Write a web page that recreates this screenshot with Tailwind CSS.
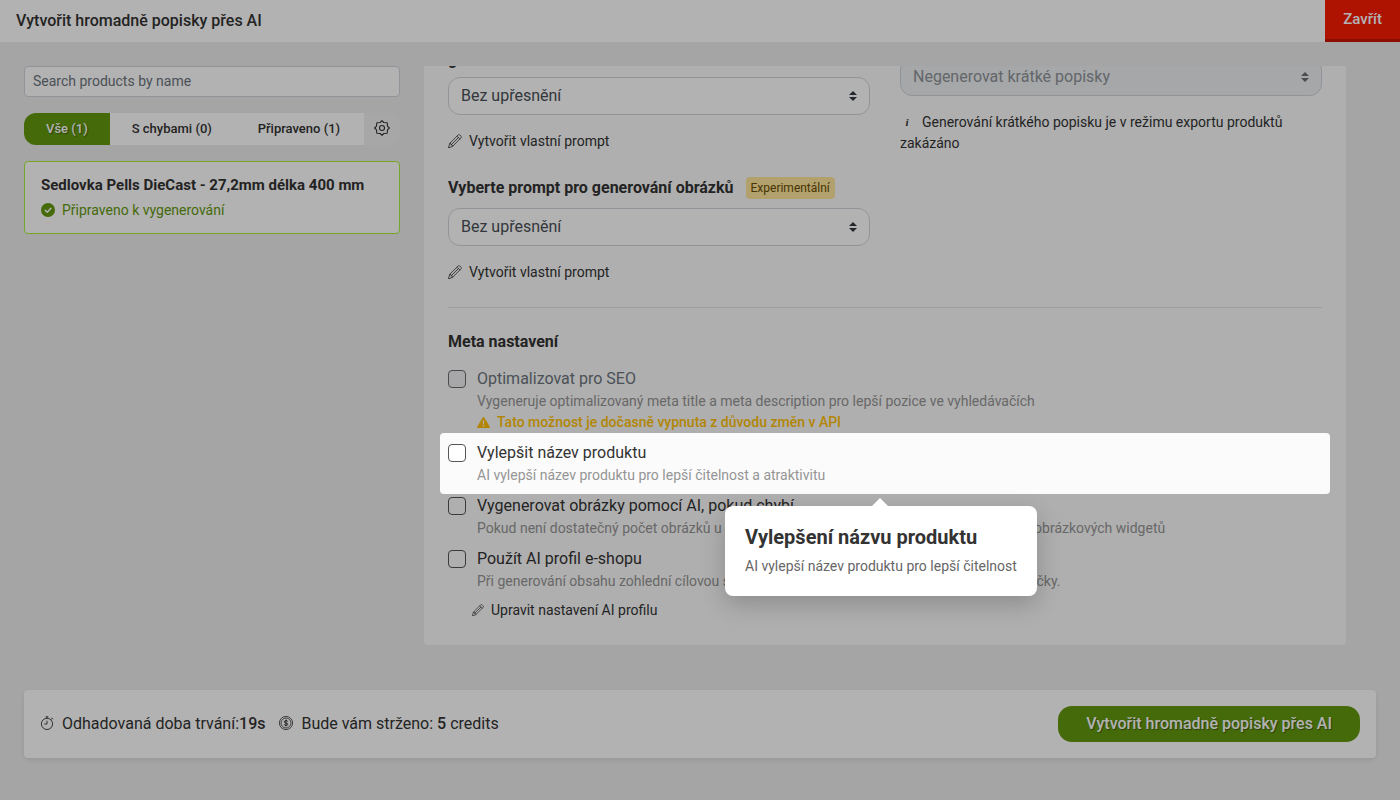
<!DOCTYPE html>
<html lang="cs">
<head>
<meta charset="utf-8">
<meta name="viewport" content="width=device-width, initial-scale=1">
<title>Vytvořit hromadně popisky přes AI</title>
<script src="https://cdn.jsdelivr.net/npm/@tailwindcss/browser@4"></script>
</head>
<body class="bg-[#ececec] font-['Roboto',sans-serif] text-sm leading-[21px] text-[#333]">
<svg class="hidden" aria-hidden="true">
  <symbol id="pencil" viewBox="0 0 14 14">
    <g fill="none" stroke="currentColor" stroke-width="0.8" stroke-linejoin="round" stroke-linecap="round">
      <path d="M0.5 13.5 L1.8 9.3 L10.3 0.9 Q11 0.3 11.7 0.9 L13.1 2.3 Q13.7 3 13.1 3.7 L4.7 12.2 Z"/>
      <path d="M9 2.2 L11.8 5 M1.8 9.3 Q3.2 9.3 3.2 10.8 Q4.7 10.8 4.7 12.2 M3.2 10.8 L10.4 3.6"/>
    </g>
  </symbol>
  <symbol id="carets" viewBox="0 0 8 10">
    <path fill="currentColor" d="M4 0 L8 4 H0 Z M4 10 L8 6 H0 Z"/>
  </symbol>
</svg>

<div class="relative min-h-screen overflow-hidden">
  <header class="flex h-[42px] items-stretch justify-between bg-white">
    <h1 class="pl-4 text-base leading-[42px] font-medium">Vytvořit hromadně popisky přes AI</h1>
    <button type="button" class="border-b-3 border-[#c81500] bg-[#f91a00] px-[18px] text-[15px] font-medium text-white">Zavřít</button>
  </header>

  <main class="p-6">
    <div class="flex items-start gap-6">
      <aside class="w-[376px] shrink-0">
        <input type="search" aria-label="Search products by name" placeholder="Search products by name" class="block h-[31px] w-full rounded border border-[#ced4da] bg-white px-2 pb-[2px] text-sm placeholder:text-[#6c757d]">

        <div class="mt-4 flex h-8 overflow-hidden rounded-xl bg-[#f0f0f0] text-[13px] font-medium">
          <button type="button" class="bg-[#63990e] px-[22px] pb-[2px] text-white text-shadow-[1px_1px_1px_rgba(0,0,0,0.4)]">Vše (1)</button>
          <button type="button" class="bg-white px-[22px] pb-[2px]">S chybami (0)</button>
          <button type="button" class="grow bg-white px-[22px] pb-[2px]">Připraveno (1)</button>
          <button type="button" aria-label="Nastavení" class="flex w-9 shrink-0 items-center justify-center pb-[2px]">
            <svg class="size-4" viewBox="0 0 16 16" fill="none" stroke="currentColor" stroke-width="1.1" stroke-linejoin="round">
              <circle cx="8" cy="8" r="2.5"/>
              <path d="M8 0.6 L9.8 2.5 L13.2 2.8 L13.5 6.2 L15.4 8 L13.5 9.8 L13.2 13.2 L9.8 13.5 L8 15.4 L6.2 13.5 L2.8 13.2 L2.5 9.8 L0.6 8 L2.5 6.2 L2.8 2.8 L6.2 2.5 Z"/>
            </svg>
          </button>
        </div>

        <article class="mt-4 rounded border border-[#a6ee3c] bg-white px-4 py-3">
          <h2 class="text-[15px] leading-[22px] font-bold">Sedlovka Pells DieCast - 27,2mm délka 400 mm</h2>
          <p class="mt-1 flex items-center gap-[7px] text-[#63990e]">
            <svg class="mb-[2px] size-[14px]" viewBox="0 0 14 14"><circle cx="7" cy="7" r="7" fill="currentColor"/><path d="M4.2 7.2 L6.2 9.2 L9.9 5.2" fill="none" stroke="#fff" stroke-width="1.5" stroke-linecap="round" stroke-linejoin="round"/></svg>
            Připraveno k vygenerování
          </p>
        </article>
      </aside>

      <section class="mr-[30px] min-w-0 grow overflow-hidden rounded-b bg-[#fbfbfb] px-6 pb-6">
        <div class="-mt-[18px]">
          <div class="grid grid-cols-2 gap-[30px]">
            <div>
              <label for="prompt-text" class="block text-base leading-6 font-bold">g</label>
              <div class="relative mt-[5px]">
                <select id="prompt-text" class="block h-[38px] w-full appearance-none rounded-xl border border-[#ced4da] bg-white px-3 text-base text-[#495057]"><option>Bez upřesnění</option></select>
                <svg class="pointer-events-none absolute top-[14px] right-[13px] h-[10px] w-2 text-[#343a40]"><use href="#carets"/></svg>
              </div>
              <a href="#" class="mt-4 flex items-center gap-[7px]"><svg class="mb-[2px] size-[14px]"><use href="#pencil"/></svg>Vytvořit vlastní prompt</a>

              <div class="mt-6 flex h-6 items-center gap-3">
                <label for="prompt-image" class="text-base leading-6 font-bold">Vyberte prompt pro generování obrázků</label>
                <span class="rounded bg-[#ffe69c] px-[5px] text-xs leading-[22px] text-[#664d03]">Experimentální</span>
              </div>
              <div class="relative mt-2">
                <select id="prompt-image" class="block h-[38px] w-full appearance-none rounded-xl border border-[#ced4da] bg-white px-3 text-base text-[#495057]"><option>Bez upřesnění</option></select>
                <svg class="pointer-events-none absolute top-[14px] right-[13px] h-[10px] w-2 text-[#343a40]"><use href="#carets"/></svg>
              </div>
              <a href="#" class="mt-4 flex items-center gap-[7px]"><svg class="mb-[2px] size-[14px]"><use href="#pencil"/></svg>Vytvořit vlastní prompt</a>
            </div>

            <div class="pt-[10px]">
              <div class="relative">
                <select disabled aria-label="Krátké popisky" class="block h-[38px] w-full appearance-none rounded-xl border border-[#ced4da] bg-[#edeff1] px-3 text-base text-[#8e9398] opacity-100"><option>Negenerovat krátké popisky</option></select>
                <svg class="pointer-events-none absolute top-[14px] right-[13px] h-[10px] w-2 text-[#6b6f73]"><use href="#carets"/></svg>
              </div>
              <p class="mt-4"><i class="mr-2 inline-block w-[14px] text-center align-[1px] font-['Liberation_Serif',serif] text-[11px] leading-none font-bold">i</i>Generování krátkého popisku je v režimu exportu produktů zakázáno</p>
            </div>
          </div>

          <hr class="mt-6 border-[#dee2e6]">

          <h2 class="mt-[22px] text-base leading-6 font-bold">Meta nastavení</h2>

          <div class="mt-[13px] flex flex-col gap-2 text-[#959595]">
            <div class="flex items-start gap-[11px]">
              <input id="seo" type="checkbox" disabled class="mt-[3px] size-[18px] shrink-0 appearance-none rounded border border-[#6c6c6c] bg-[#f0f0f2]">
              <div>
                <label for="seo" class="block text-base leading-6 text-[#6c757d]">Optimalizovat pro SEO</label>
                <p>Vygeneruje optimalizovaný meta title a meta description pro lepší pozice ve vyhledávačích</p>
                <p class="flex items-center gap-[7px] font-medium text-[#ffc107]">
                  <svg class="h-[11px] w-[13px]" viewBox="0 0 13 11"><path fill="currentColor" fill-rule="evenodd" d="M5.7 0.5 Q6.5 -0.5 7.3 0.5 L12.8 9.8 Q13 11 12 11 H1 Q0 11 0.2 9.8 Z M5.8 3.5 L6 7.2 H7 L7.2 3.5 Z M5.8 8 H7.2 V9.4 H5.8 Z"/></svg>
                  Tato možnost je dočasně vypnuta z důvodu změn v API
                </p>
              </div>
            </div>
            <div class="flex items-start gap-[11px]">
              <input id="name" type="checkbox" class="mt-[3px] size-[18px] shrink-0 appearance-none rounded border border-[#555] bg-white">
              <div>
                <label for="name" class="block text-base leading-6 text-[#333]">Vylepšit název produktu</label>
                <p>AI vylepší název produktu pro lepší čitelnost a atraktivitu</p>
              </div>
            </div>
            <div class="flex items-start gap-[11px]">
              <input id="images" type="checkbox" class="mt-[3px] size-[18px] shrink-0 appearance-none rounded border border-[#555] bg-[#fbfbfb]">
              <div>
                <label for="images" class="block text-base leading-6 text-[#333]">Vygenerovat obrázky pomocí AI, pokud chybí</label>
                <p>Pokud není dostatečný počet obrázků u produktu, AI vygeneruje chybějící a doplní také do obrázkových widgetů</p>
              </div>
            </div>
            <div class="flex items-start gap-[11px]">
              <input id="profile" type="checkbox" class="mt-[3px] size-[18px] shrink-0 appearance-none rounded border border-[#555] bg-[#fbfbfb]">
              <div>
                <label for="profile" class="block text-base leading-6 text-[#333]">Použít AI profil e-shopu</label>
                <p>Při generování obsahu zohlední cílovou skupinu, tón komunikace a hlavní hodnoty vaší značky.</p>
              </div>
            </div>
            <a href="#" class="ml-6 flex items-center gap-[7px] text-[#333]"><svg class="mb-[2px] size-3"><use href="#pencil"/></svg>Upravit nastavení AI profilu</a>
          </div>
        </div>
      </section>
    </div>

    <footer class="mt-[45px] flex items-center justify-between rounded bg-white p-4 text-base shadow-[0_2px_4px_rgba(0,0,0,0.08)]">
      <div class="flex items-center gap-[14px]">
        <span class="flex items-center gap-2">
          <svg class="mb-[2px] size-[14px]" viewBox="0 0 14 14" fill="none" stroke="currentColor" stroke-width="0.9"><circle cx="7" cy="7.9" r="5.6"/><path d="M7 4.7 V8 H4.2 M7 2.2 V0.8 M5.6 0.8 H8.4 M11 3.7 L12.2 2.5 M11.5 1.7 L13 3.2"/></svg>
          <span>Odhadovaná doba trvání:<b class="font-medium">19s</b></span>
        </span>
        <span class="flex items-center gap-2">
          <svg class="mb-[2px] size-[14px]" viewBox="0 0 14 14" fill="none" stroke="currentColor" stroke-width="0.8"><circle cx="7" cy="7" r="6.6"/><circle cx="7" cy="7" r="5"/><path stroke-width="1" d="M8.8 5.6 Q8.6 4.6 7 4.6 Q5.3 4.6 5.3 5.8 Q5.3 6.8 7 7 Q8.8 7.2 8.8 8.3 Q8.8 9.4 7 9.4 Q5.3 9.4 5.2 8.3 M7 3.6 V10.4"/></svg>
          <span>Bude vám strženo: <b class="font-medium">5</b> credits</span>
        </span>
      </div>
      <button type="button" class="h-9 rounded-[14px] bg-[#63990e] px-7 font-medium text-white text-shadow-[1px_1px_1px_rgba(0,0,0,0.4)]">Vytvořit hromadně popisky přes AI</button>
    </footer>
  </main>

  <!-- Guided tour: spotlight that dims the rest of the page, with its popover -->
  <div class="pointer-events-none absolute top-[433px] right-[70px] left-[440px] h-[61px] rounded shadow-[0_0_0_2000px_rgba(0,0,0,0.3)]">
    <div role="dialog" aria-labelledby="tour-title" class="absolute top-[73px] left-[285px] rounded-lg bg-white px-5 pt-4 pb-[19px] whitespace-nowrap shadow-[0_8px_24px_rgba(0,0,0,0.2)]">
      <svg class="absolute -top-2 left-[147px] h-2 w-4" viewBox="0 0 16 8"><path d="M0 8 L8 0 L16 8 Z" fill="#fff"/></svg>
      <h3 id="tour-title" class="text-xl leading-[30px] font-bold">Vylepšení názvu produktu</h3>
      <p class="mt-1 text-[#666]">AI vylepší název produktu pro lepší čitelnost</p>
    </div>
  </div>
</div>
</body>
</html>
